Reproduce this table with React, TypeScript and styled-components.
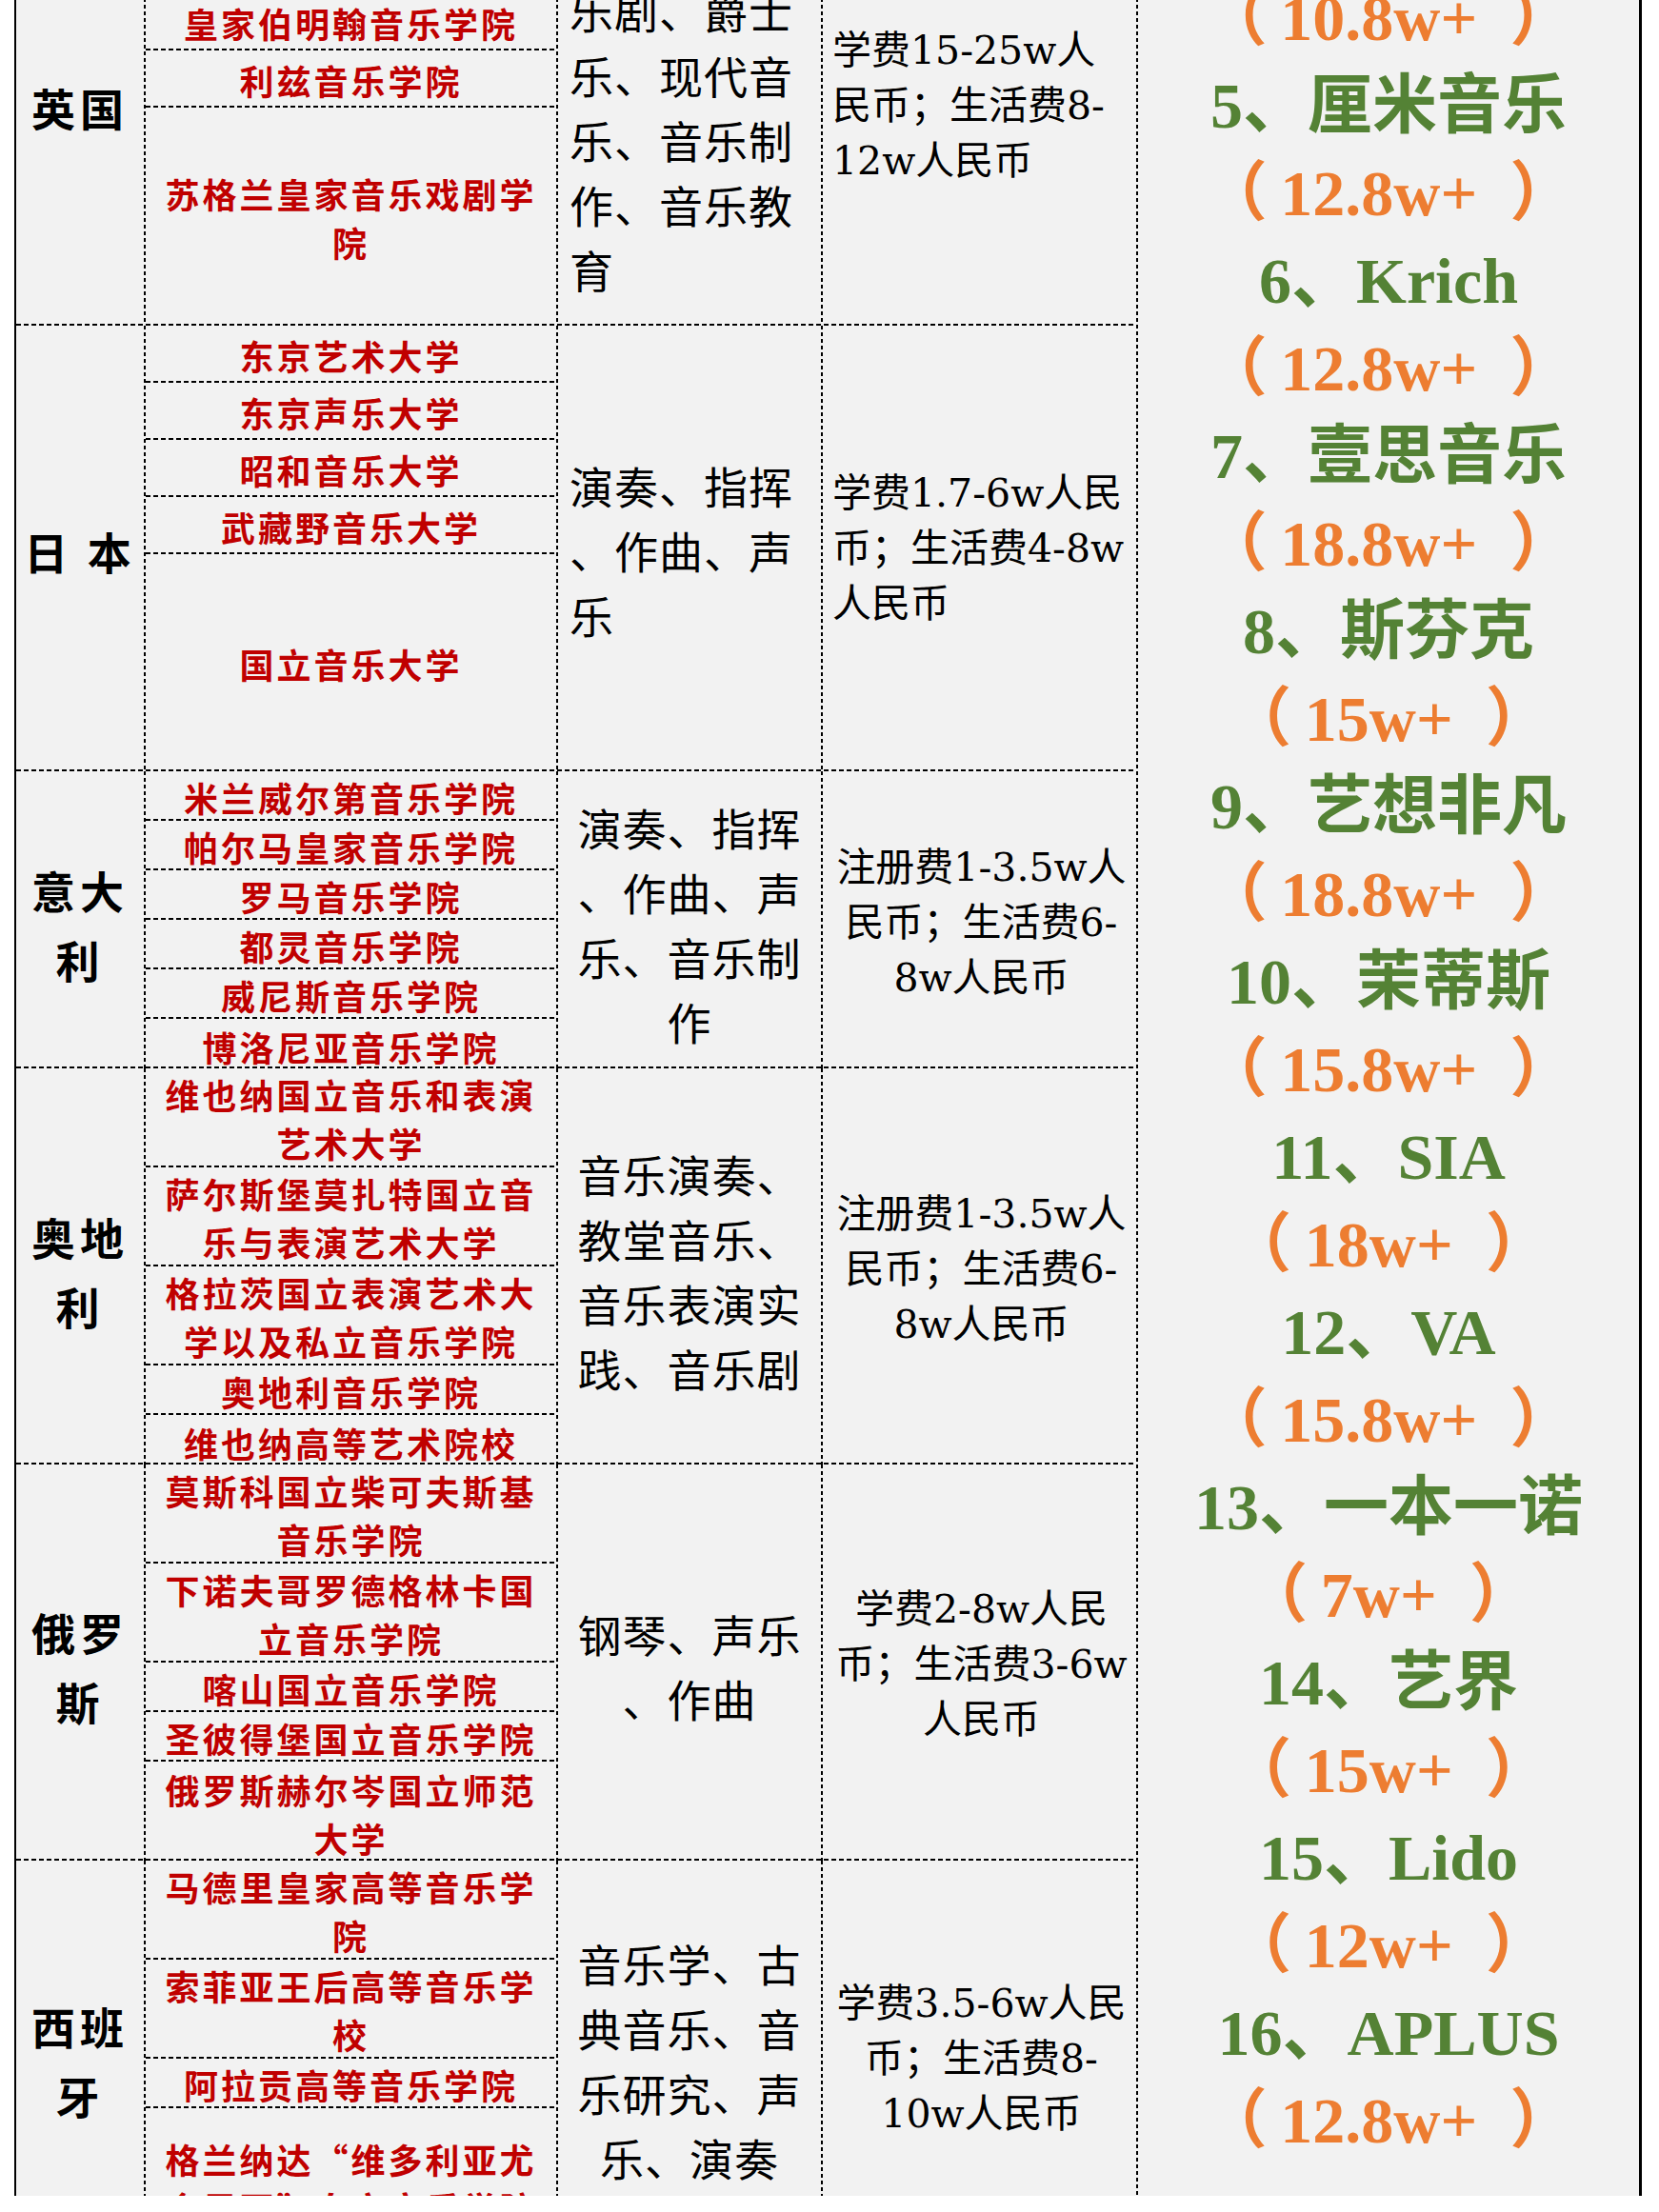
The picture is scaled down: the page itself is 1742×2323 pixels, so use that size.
import React from 'react';
import styled, { createGlobalStyle } from 'styled-components';

const GlobalStyle = createGlobalStyle`
  html, body { margin: 0; padding: 0; background: #ffffff; }
  * { box-sizing: border-box; }
`;

const V_DASH_RIGHT =
  'repeating-linear-gradient(to bottom, #000 0 4px, transparent 4px 7px) right top / 2px 100% no-repeat';
const V_DASH_LEFT =
  'repeating-linear-gradient(to bottom, #000 0 4px, transparent 4px 7px) left top / 2px 100% no-repeat';
const H_DASH_BOTTOM =
  'repeating-linear-gradient(to right, #000 0 5px, transparent 5px 8px) left bottom / 100% 2px no-repeat';

const CJK = '"Noto Sans CJK SC", "Noto Sans CJK JP", sans-serif';

const Viewport = styled.div`
  width: 1742px;
  height: 2306px;
  overflow: hidden;
  background: #ffffff;
`;

const Table = styled.div`
  display: flex;
  margin: -121px 0 0 15px;
  width: 1709px;
  min-height: 2560px;
  background: #f2f2f2;
  border-left: 2px solid #000;
  border-right: 3px solid #000;
`;

const Groups = styled.div`
  flex: none;
  width: 1176px;
  display: flex;
  flex-direction: column;
`;

const GroupBlock = styled.section<{ $h: number }>`
  display: grid;
  grid-template-columns: 136px 433px 278px 329px;
  height: ${(p) => p.$h}px;
  padding-bottom: 2px;
  background: ${H_DASH_BOTTOM};
`;

const CountryCell = styled.div`
  display: flex;
  align-items: center;
  justify-content: center;
  padding: 6px 2px 0 0;
  background: ${V_DASH_RIGHT};
  font-family: ${CJK};
  font-weight: 700;
  font-size: 46px;
  line-height: 73px;
  letter-spacing: 5px;
  color: #000;
  text-align: center;
  white-space: nowrap;
`;

const SchoolList = styled.div`
  display: flex;
  flex-direction: column;
  padding-right: 2px;
  background: ${V_DASH_RIGHT};
`;

const SchoolRow = styled.div<{ $h?: number; $last?: boolean }>`
  display: flex;
  align-items: center;
  justify-content: center;
  ${(p) => (p.$h ? `height: ${p.$h}px; flex: none;` : 'flex: 1;')}
  padding: ${(p) => (p.$last ? '4px 0 0' : '4px 0 2px')};
  background: ${(p) => (p.$last ? 'none' : H_DASH_BOTTOM)};
  font-family: ${CJK};
  font-weight: 700;
  font-size: 36px;
  line-height: 51px;
  letter-spacing: 3px;
  color: #c00000;
  text-align: center;
  white-space: nowrap;
`;

const MajorCell = styled.div<{ $align: 'left' | 'center' }>`
  display: flex;
  align-items: center;
  justify-content: ${(p) => (p.$align === 'left' ? 'flex-start' : 'center')};
  padding: 4px 14px 0 12px;
  background: ${V_DASH_RIGHT};
  font-family: ${CJK};
  font-weight: 400;
  font-size: 46px;
  line-height: 68px;
  letter-spacing: 1px;
  color: #000;
  text-align: ${(p) => p.$align};
  white-space: nowrap;
`;

const FeeCell = styled.div<{ $align: 'left' | 'center' }>`
  display: flex;
  align-items: center;
  justify-content: ${(p) => (p.$align === 'left' ? 'flex-start' : 'center')};
  padding: 2px 6px 0 10px;
  font-family: "DejaVu Serif", ${CJK};
  font-weight: 400;
  font-size: 41px;
  line-height: 58px;
  color: #000;
  text-align: ${(p) => p.$align};
  white-space: nowrap;
`;

const Lines = styled.div``;

const Ranking = styled.div`
  flex: 1;
  display: flex;
  flex-direction: column;
  padding: 94px 0 0 2px;
  background: ${V_DASH_LEFT};
`;

const RankLine = styled.div<{ $tone: 'green' | 'orange' }>`
  height: 92px;
  display: flex;
  align-items: center;
  justify-content: center;
  font-family: "Liberation Serif", ${CJK};
  font-weight: 700;
  font-size: 68px;
  line-height: 1;
  white-space: pre;
  color: ${(p) => (p.$tone === 'green' ? '#548235' : '#ed7d31')};
`;

type School = { lines: string[]; h?: number };
type Group = {
  country: string[];
  height: number;
  schools: School[];
  majors: string[];
  majorsAlign: 'left' | 'center';
  fees: string[];
  feesAlign: 'left' | 'center';
};

const NBSP = '\u00a0';

const groups: Group[] = [
  {
    country: ['英国'],
    height: 463,
    schools: [
      { lines: [NBSP], h: 114 },
      { lines: ['皇家伯明翰音乐学院'], h: 60 },
      { lines: ['利兹音乐学院'], h: 60 },
      { lines: ['苏格兰皇家音乐戏剧学', '院'] },
    ],
    majors: [NBSP, '乐剧、爵士', '乐、现代音', '乐、音乐制', '作、音乐教', '育'],
    majorsAlign: 'left',
    fees: ['学费15-25w人', '民币；生活费8-', '12w人民币'],
    feesAlign: 'left',
  },
  {
    country: ['日 本'],
    height: 468,
    schools: [
      { lines: ['东京艺术大学'], h: 60 },
      { lines: ['东京声乐大学'], h: 60 },
      { lines: ['昭和音乐大学'], h: 60 },
      { lines: ['武藏野音乐大学'], h: 60 },
      { lines: ['国立音乐大学'] },
    ],
    majors: ['演奏、指挥', '、作曲、声', '乐'],
    majorsAlign: 'left',
    fees: ['学费1.7-6w人民', '币；生活费4-8w', '人民币'],
    feesAlign: 'left',
  },
  {
    country: ['意大', '利'],
    height: 312,
    schools: [
      { lines: ['米兰威尔第音乐学院'], h: 52 },
      { lines: ['帕尔马皇家音乐学院'], h: 52 },
      { lines: ['罗马音乐学院'], h: 52 },
      { lines: ['都灵音乐学院'], h: 52 },
      { lines: ['威尼斯音乐学院'], h: 52 },
      { lines: ['博洛尼亚音乐学院'] },
    ],
    majors: ['演奏、指挥', '、作曲、声', '乐、音乐制', '作'],
    majorsAlign: 'center',
    fees: ['注册费1-3.5w人', '民币；生活费6-', '8w人民币'],
    feesAlign: 'center',
  },
  {
    country: ['奥地', '利'],
    height: 416,
    schools: [
      { lines: ['维也纳国立音乐和表演', '艺术大学'], h: 104 },
      { lines: ['萨尔斯堡莫扎特国立音', '乐与表演艺术大学'], h: 104 },
      { lines: ['格拉茨国立表演艺术大', '学以及私立音乐学院'], h: 104 },
      { lines: ['奥地利音乐学院'], h: 52 },
      { lines: ['维也纳高等艺术院校'] },
    ],
    majors: ['音乐演奏、', '教堂音乐、', '音乐表演实', '践、音乐剧'],
    majorsAlign: 'center',
    fees: ['注册费1-3.5w人', '民币；生活费6-', '8w人民币'],
    feesAlign: 'center',
  },
  {
    country: ['俄罗', '斯'],
    height: 416,
    schools: [
      { lines: ['莫斯科国立柴可夫斯基', '音乐学院'], h: 104 },
      { lines: ['下诺夫哥罗德格林卡国', '立音乐学院'], h: 104 },
      { lines: ['喀山国立音乐学院'], h: 52 },
      { lines: ['圣彼得堡国立音乐学院'], h: 52 },
      { lines: ['俄罗斯赫尔岑国立师范', '大学'] },
    ],
    majors: ['钢琴、声乐', '、作曲'],
    majorsAlign: 'center',
    fees: ['学费2-8w人民', '币；生活费3-6w', '人民币'],
    feesAlign: 'center',
  },
  {
    country: ['西班', '牙'],
    height: 416,
    schools: [
      { lines: ['马德里皇家高等音乐学', '院'], h: 104 },
      { lines: ['索菲亚王后高等音乐学', '校'], h: 104 },
      { lines: ['阿拉贡高等音乐学院'], h: 52 },
      { lines: ['格兰纳达“维多利亚尤', '金尼亚”皇家音乐学院'] },
    ],
    majors: ['音乐学、古', '典音乐、音', '乐研究、声', '乐、演奏'],
    majorsAlign: 'center',
    fees: ['学费3.5-6w人民', '币；生活费8-', '10w人民币'],
    feesAlign: 'center',
  },
];

const price = (v: string) => `（\u2009${v}\u2002）`;

const ranking: { text: string; tone: 'green' | 'orange' }[] = [
  { text: price('10.8w+'), tone: 'orange' },
  { text: '5、厘米音乐', tone: 'green' },
  { text: price('12.8w+'), tone: 'orange' },
  { text: '6、Krich', tone: 'green' },
  { text: price('12.8w+'), tone: 'orange' },
  { text: '7、壹思音乐', tone: 'green' },
  { text: price('18.8w+'), tone: 'orange' },
  { text: '8、斯芬克', tone: 'green' },
  { text: price('15w+'), tone: 'orange' },
  { text: '9、艺想非凡', tone: 'green' },
  { text: price('18.8w+'), tone: 'orange' },
  { text: '10、茉蒂斯', tone: 'green' },
  { text: price('15.8w+'), tone: 'orange' },
  { text: '11、SIA', tone: 'green' },
  { text: price('18w+'), tone: 'orange' },
  { text: '12、VA', tone: 'green' },
  { text: price('15.8w+'), tone: 'orange' },
  { text: '13、一本一诺', tone: 'green' },
  { text: price('7w+'), tone: 'orange' },
  { text: '14、艺界', tone: 'green' },
  { text: price('15w+'), tone: 'orange' },
  { text: '15、Lido', tone: 'green' },
  { text: price('12w+'), tone: 'orange' },
  { text: '16、APLUS', tone: 'green' },
  { text: price('12.8w+'), tone: 'orange' },
];

const Multi: React.FC<{ lines: string[] }> = ({ lines }) => (
  <Lines>
    {lines.map((l, i) => (
      <React.Fragment key={i}>
        {i > 0 && <br />}
        {l}
      </React.Fragment>
    ))}
  </Lines>
);

export default function App() {
  return (
    <Viewport>
      <GlobalStyle />
      <Table>
        <Groups>
          {groups.map((g, gi) => (
            <GroupBlock key={gi} $h={g.height}>
              <CountryCell>
                <Multi lines={g.country} />
              </CountryCell>
              <SchoolList>
                {g.schools.map((s, si) => (
                  <SchoolRow key={si} $h={s.h} $last={si === g.schools.length - 1}>
                    <Multi lines={s.lines} />
                  </SchoolRow>
                ))}
              </SchoolList>
              <MajorCell $align={g.majorsAlign}>
                <Multi lines={g.majors} />
              </MajorCell>
              <FeeCell $align={g.feesAlign}>
                <Multi lines={g.fees} />
              </FeeCell>
            </GroupBlock>
          ))}
        </Groups>
        <Ranking>
          {ranking.map((r, i) => (
            <RankLine key={i} $tone={r.tone}>
              {r.text}
            </RankLine>
          ))}
        </Ranking>
      </Table>
    </Viewport>
  );
}
